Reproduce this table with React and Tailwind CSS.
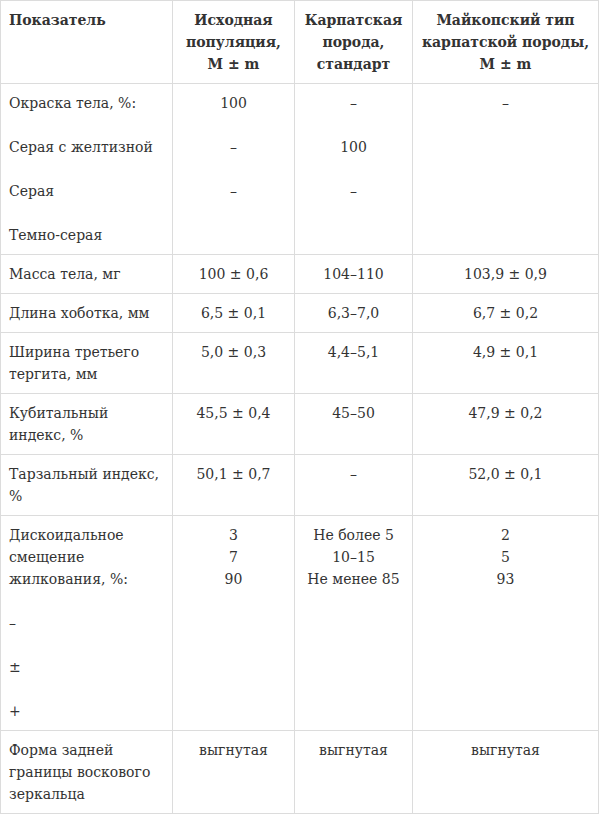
import React from 'react';

const rows = [
  {
    cells: [
      ['Окраска тела, %:', 'Серая с желтизной', 'Серая', 'Темно-серая'],
      ['100', '–', '–', ''],
      ['–', '100', '–', ''],
      ['–', '', '', ''],
    ],
  },
  { cells: [['Масса тела, мг'], ['100 ± 0,6'], ['104–110'], ['103,9 ± 0,9']] },
  { cells: [['Длина хоботка, мм'], ['6,5 ± 0,1'], ['6,3–7,0'], ['6,7 ± 0,2']] },
  { cells: [['Ширина третьего\nтергита, мм'], ['5,0 ± 0,3'], ['4,4–5,1'], ['4,9 ± 0,1']] },
  { cells: [['Кубитальный\nиндекс, %'], ['45,5 ± 0,4'], ['45–50'], ['47,9 ± 0,2']] },
  { cells: [['Тарзальный индекс,\n%'], ['50,1 ± 0,7'], ['–'], ['52,0 ± 0,1']] },
  {
    cells: [
      ['Дискоидальное\nсмещение\nжилкования, %:', '–', '±', '+'],
      ['3\n7\n90'],
      ['Не более 5\n10–15\nНе менее 85'],
      ['2\n5\n93'],
    ],
  },
  {
    cells: [
      ['Форма задней\nграницы воскового\nзеркальца'],
      ['выгнутая'],
      ['выгнутая'],
      ['выгнутая'],
    ],
  },
];

function Lines({ text }) {
  const parts = text.split('\n');
  return (
    <p className="mb-[22px] last:mb-0 min-h-[22px]">
      {parts.map((t, i) => (
        <React.Fragment key={i}>
          {i > 0 && <br />}
          {t}
        </React.Fragment>
      ))}
    </p>
  );
}

export default function App() {
  return (
    <div className="w-[600px] bg-white text-[#333] font-['DejaVu_Serif',serif] text-[14px] leading-[22px]">
      <table className="w-[598px] border-collapse table-fixed">
        <colgroup>
          <col className="w-[172px]" />
          <col className="w-[122px]" />
          <col className="w-[118px]" />
          <col className="w-[186px]" />
        </colgroup>
        <thead>
          <tr className="font-bold">
            <th className="border border-[#dcdcdc] p-2 text-left align-top font-bold">Показатель</th>
            <th className="border border-[#dcdcdc] p-2 text-center align-top font-bold">
              Исходная
              <br />
              популяция,
              <br />M ± m
            </th>
            <th className="border border-[#dcdcdc] p-2 text-center align-top font-bold">
              Карпатская
              <br />
              порода,
              <br />
              стандарт
            </th>
            <th className="border border-[#dcdcdc] p-2 text-center align-top font-bold">
              Майкопский тип
              <br />
              карпатской породы,
              <br />M ± m
            </th>
          </tr>
        </thead>
        <tbody>
          {rows.map((row, r) => (
            <tr key={r}>
              {row.cells.map((cell, c) => (
                <td
                  key={c}
                  className={
                    c === 0
                      ? 'border border-[#dcdcdc] p-2 text-left align-top'
                      : 'border border-[#dcdcdc] p-2 text-center align-top'
                  }
                >
                  {cell.map((t, i) => (
                    <Lines key={i} text={t} />
                  ))}
                </td>
              ))}
            </tr>
          ))}
        </tbody>
      </table>
    </div>
  );
}
